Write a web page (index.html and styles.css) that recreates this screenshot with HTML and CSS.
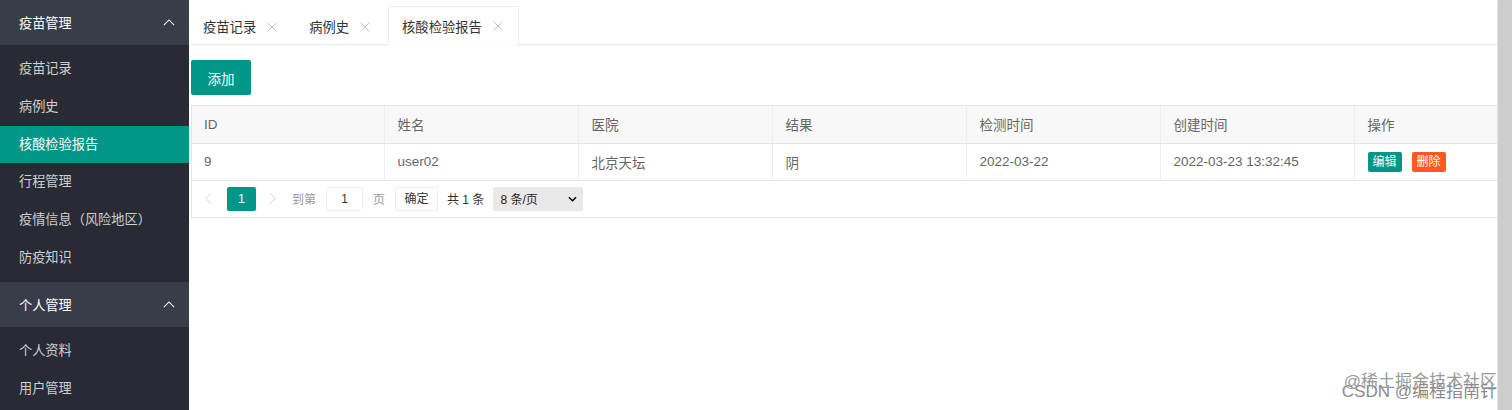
FILE: index.html
```html
<!DOCTYPE html>
<html lang="zh-CN">
<head>
<meta charset="utf-8">
<title>核酸检验报告</title>
<link rel="stylesheet" href="styles.css">
</head>
<body>
<div class="layout">
  <aside class="side">
    <div class="grp">
      <div class="grp-title"><span>疫苗管理</span><svg class="chev" viewBox="0 0 14 8" width="12" height="7"><polyline points="1,7 7,1 13,7" fill="none" stroke="#fff" stroke-width="1.2"/></svg></div>
      <ul class="grp-list">
        <li>疫苗记录</li>
        <li>病例史</li>
        <li class="on">核酸检验报告</li>
        <li>行程管理</li>
        <li>疫情信息（风险地区）</li>
        <li>防疫知识</li>
      </ul>
    </div>
    <div class="grp">
      <div class="grp-title"><span>个人管理</span><svg class="chev" viewBox="0 0 14 8" width="12" height="7"><polyline points="1,7 7,1 13,7" fill="none" stroke="#fff" stroke-width="1.2"/></svg></div>
      <ul class="grp-list">
        <li>个人资料</li>
        <li>用户管理</li>
      </ul>
    </div>
  </aside>
  <main class="main">
    <div class="tabs">
      <div class="tab"><span>疫苗记录</span><svg class="x" viewBox="0 0 10 10" width="10" height="10"><path d="M0.5 0.5L9.5 9.5M9.5 0.5L0.5 9.5" stroke="#c2c2c2" stroke-width="1"/></svg></div>
      <div class="tab"><span>病例史</span><svg class="x" viewBox="0 0 10 10" width="10" height="10"><path d="M0.5 0.5L9.5 9.5M9.5 0.5L0.5 9.5" stroke="#c2c2c2" stroke-width="1"/></svg></div>
      <div class="tab active"><span>核酸检验报告</span><svg class="x" viewBox="0 0 10 10" width="10" height="10"><path d="M0.5 0.5L9.5 9.5M9.5 0.5L0.5 9.5" stroke="#c2c2c2" stroke-width="1"/></svg></div>
    </div>
    <div class="body">
      <div class="toolbar"><button class="btn">添加</button></div>
      <div class="tbl-box">
        <table class="tbl">
          <colgroup>
            <col class="c0"><col class="c"><col class="c"><col class="c"><col class="c"><col class="c"><col class="c-last">
          </colgroup>
          <thead>
            <tr><th>ID</th><th>姓名</th><th>医院</th><th>结果</th><th>检测时间</th><th>创建时间</th><th>操作</th></tr>
          </thead>
          <tbody>
            <tr>
              <td>9</td><td>user02</td><td>北京天坛</td><td>阴</td><td>2022-03-22</td><td>2022-03-23 13:32:45</td>
              <td><span class="mini edit">编辑</span><span class="mini del">删除</span></td>
            </tr>
          </tbody>
        </table>
        <div class="pager">
          <svg class="arr" viewBox="0 0 8 14" width="7" height="13"><polyline points="7,1 1,7 7,13" fill="none" stroke="#ccc" stroke-width="1"/></svg>
          <span class="cur">1</span>
          <svg class="arr" viewBox="0 0 8 14" width="7" height="13"><polyline points="1,1 7,7 1,13" fill="none" stroke="#ccc" stroke-width="1"/></svg>
          <span class="muted goto">到第</span>
          <span class="inp">1</span>
          <span class="muted">页</span>
          <span class="ok">确定</span>
          <span class="total">共 1 条</span>
          <span class="sel"><span>8 条/页</span><svg viewBox="0 0 10 6" width="9" height="6"><polyline points="1,1 5,5 9,1" fill="none" stroke="#000" stroke-width="1.6"/></svg></span>
        </div>
      </div>
    </div>
    <div class="wm"><span class="w1">@稀土掘金技术社区</span><span class="w2">CSDN @编程指南针</span></div>
  </main>
  <div class="scroll"></div>
</div>
</body>
</html>
```
FILE: styles.css
```css
* { box-sizing: border-box; margin: 0; padding: 0; }
html, body { height: 100%; }
body {
  font-family: "Liberation Sans", "Noto Sans CJK SC", sans-serif;
  font-size: 13px;
  color: #666;
  background: #fff;
  overflow: hidden;
}
.layout { display: flex; height: 410px; }

.side { width: 189px; flex: none; background: #282b33; color: #fff; }
.grp-title {
  height: 45px; display: flex; align-items: center; justify-content: space-between;
  padding: 0 14px 0 19px; background: #393d49; font-size: 13.2px; color: #fff;
}
.chev { display: block; }
.grp-list { list-style: none; padding: 5px 0; background: #282b33; }
.grp-list li {
  height: 37.8px; line-height: 37.8px; padding-left: 19px;
  font-size: 13.2px; color: rgba(255,255,255,.78);
}
.grp-list li.on { background: #009688; color: #fff; }

.main { flex: 1; min-width: 0; position: relative; }
.tabs {
  height: 45px; display: flex; align-items: flex-end;
  border-bottom: 1px solid #eee; box-shadow: 0 1px 2px rgba(0,0,0,.03);
}
.tab {
  height: 38px; display: flex; align-items: center; gap: 11px;
  padding: 0 17px 0 13px; font-size: 13.3px; color: #333;
  border: 1px solid transparent; border-bottom: none; margin-bottom: -1px;
}
.tab .x { display: block; }
.tab.active { background: #fff; border-color: #eee; height: 39px; padding: 0 15px 0 13px; }

.body { padding: 15px 0 0 2px; }
.toolbar { height: 45px; }
.btn {
  width: 60px; height: 35px; border: none; background: #009688; color: #fff;
  font-family: inherit; font-size: 13.5px; border-radius: 2px;
}
.tbl-box { border: 1px solid #e6e6e6; border-right: none; }
.tbl { width: 100%; border-collapse: collapse; table-layout: fixed; }
.tbl col.c0 { width: 192px; }
.tbl col.c { width: 194px; }
.tbl col.c-last { width: auto; }
.tbl th, .tbl td {
  height: 37px; text-align: left; font-weight: normal; padding: 0 13px;
  border-right: 1px solid #eee; border-bottom: 1px solid #e6e6e6;
  color: #666; font-size: 13.5px;
}
.tbl th:first-child, .tbl td:first-child { padding-left: 12px; }
.tbl th:last-child, .tbl td:last-child { border-right: none; }
.tbl thead tr { background: #f8f8f8; }
.mini {
  display: inline-block; width: 34px; height: 20px; line-height: 20px; text-align: center;
  color: #fff; font-size: 12px; border-radius: 2px; margin-right: 10px; vertical-align: middle;
}
.mini.edit { background: #009688; }
.mini.del { background: #ff5722; }

.pager { height: 36px; display: flex; align-items: center; padding-left: 13px; font-size: 12px; }
.pager .arr { display: block; flex: none; }
.pager .cur {
  width: 29px; height: 24px; line-height: 24px; text-align: center;
  background: #009688; color: #fff; margin: 0 13px 0 15px; border-radius: 2px; font-size: 12.5px;
}
.pager .goto { margin-left: 16px; }
.pager .muted { color: #999; }
.pager .inp {
  width: 37px; height: 24px; line-height: 22px; text-align: center;
  border: 1px solid #eee; color: #333; margin: 0 10px; border-radius: 2px;
}
.pager .ok {
  width: 43px; height: 24px; line-height: 22px; text-align: center;
  border: 1px solid #eee; color: #333; margin-left: 10px; border-radius: 2px; font-size: 12px;
}
.pager .total { color: #333; margin-left: 9px; }
.pager .sel {
  width: 90px; height: 24px; display: flex; align-items: center; justify-content: space-between;
  background: #e9e9e9; color: #222; padding: 0 6px 0 7px; margin-left: 9px; border-radius: 2px;
}
.pager .sel svg { display: block; }

.scroll { width: 15px; flex: none; background: #cdcdcd; border-left: 1px solid #e4e4e4; }

.wm {
  position: absolute; right: 0; bottom: 8px; width: 170px; height: 32px;
  font-size: 17px; color: #888; pointer-events: none;
}
.wm span { position: absolute; white-space: nowrap; text-shadow: 0 0 1px #fff; }
.wm .w1 { right: 0; top: -3px; color: #999; }
.wm .w2 { right: 0; top: 7px; color: #8a8a8a; }
```
